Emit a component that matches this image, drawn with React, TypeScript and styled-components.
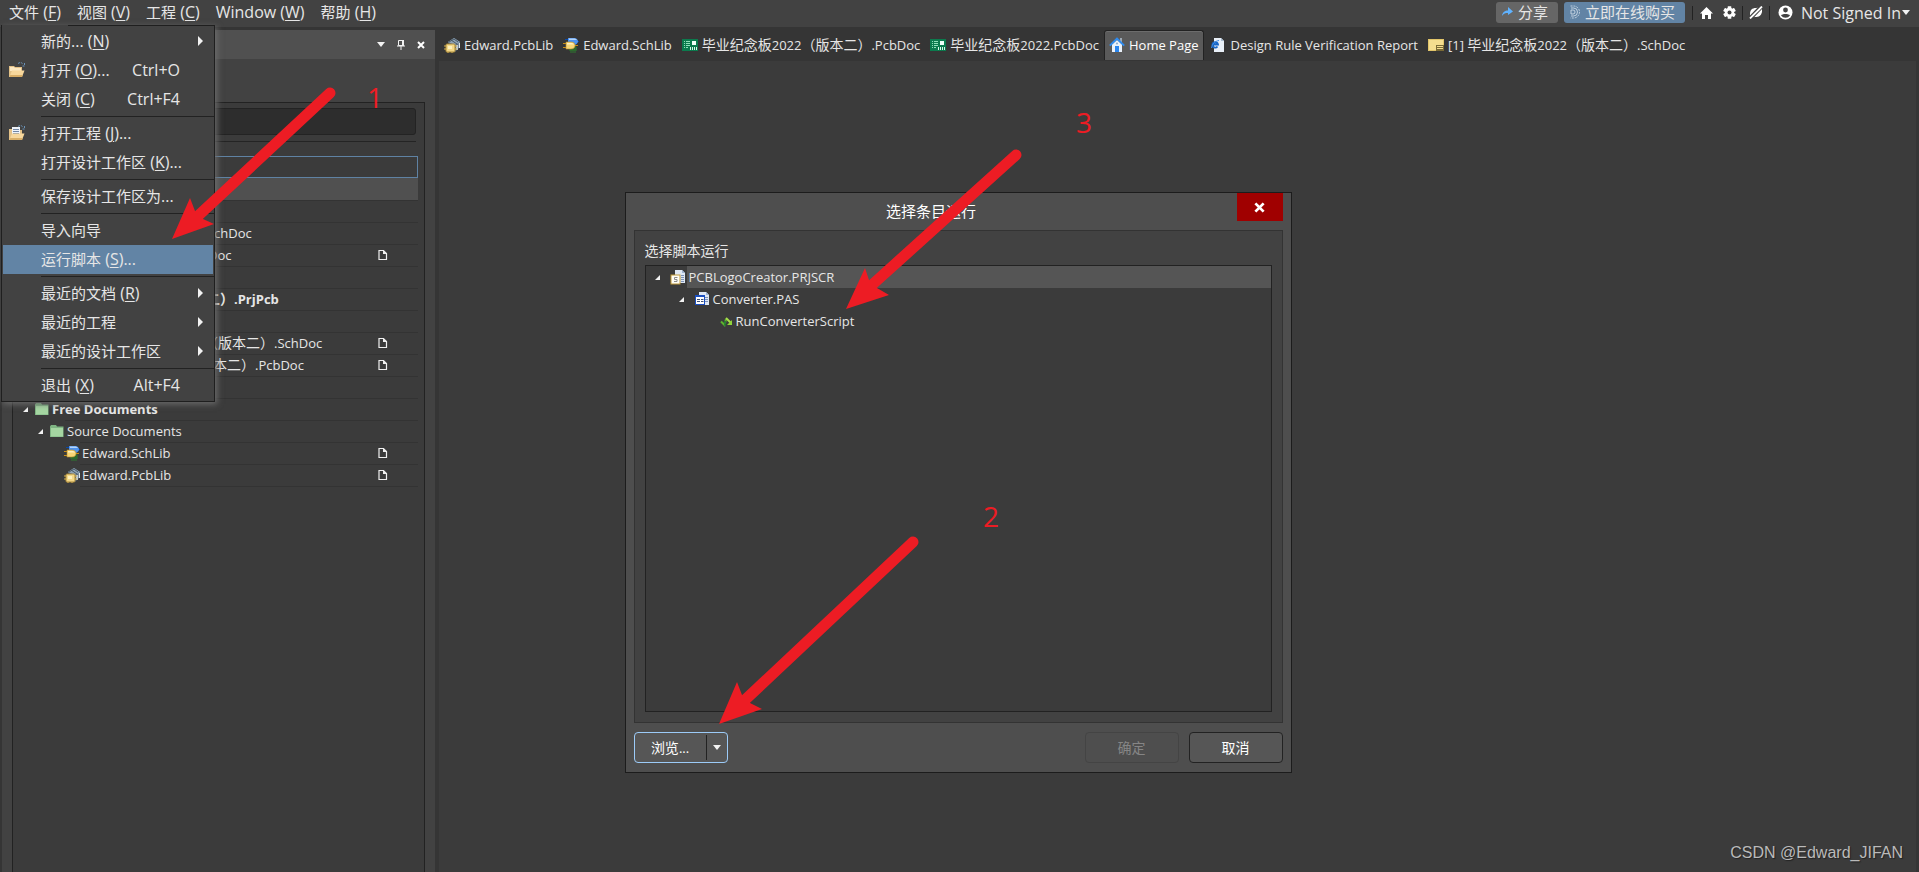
import React from "react";
import styled, { createGlobalStyle, css } from "styled-components";

const LATIN = `"Open Sans", "Noto Sans", "Noto Sans CJK SC", sans-serif`;
const CJK = `"Noto Sans CJK SC", "Open Sans", sans-serif`;

const GlobalStyle = createGlobalStyle`
  * { box-sizing: border-box; }
  body {
    margin: 0;
    background: #353535;
    color: #e6e6e6;
    font: 13px/22px ${LATIN};
  }
  button, input {
    font: inherit;
    color: inherit;
    border: 0;
    padding: 0;
    background: none;
  }
  svg { display: block; flex: none; }
  u { text-underline-offset: 2px; text-decoration-thickness: 1px; }
`;

/* ---------- text ---------- */

const Han = styled.span<{ $size: number }>`
  font-family: ${CJK};
  font-size: ${(p) => p.$size}px;
  line-height: 1;
`;

const Text = styled.span`
  white-space: pre;
`;

function Mixed({ children, size = 14 }: { children: string; size?: number }) {
  const parts = children.split(/([\u3000-\u9fff\uff00-\uffef]+)/);
  return (
    <Text>
      {parts.map((part, i) =>
        i % 2 ? (
          <Han key={i} $size={size}>
            {part}
          </Han>
        ) : (
          part
        )
      )}
    </Text>
  );
}

function MenuText({ label, accel, tail }: { label: string; accel?: string; tail?: string }) {
  return (
    <Text>
      <Mixed size={15}>{label}</Mixed>
      {accel && (
        <>
          {" ("}
          <u>{accel}</u>)
        </>
      )}
      {tail}
    </Text>
  );
}

/* ---------- icons ---------- */

const PcbLibIcon = () => (
  <svg width="16" height="16" viewBox="0 0 16 16">
    <path d="M4 5 10 1l6 4v5l-5 5-4-3z" fill="#596b7c" />
    <path d="M4 5 10 1l6 4-5 3z" fill="#8ea3b5" />
    <path d="M7 3l6 4M10 2l4 3M5 5l5-3" stroke="#4a5966" strokeWidth="1" />
    <path d="M13 8v5M15.500 6v5" stroke="#dfe7ec" strokeWidth="1.500" />
    <rect x="2" y="7" width="9" height="8" rx="1" fill="#f3d888" stroke="#a98738" />
    <path d="M0 9h3M0 12h3M10 9h3M10 12h3M4 15v1M8 15v1" stroke="#d3b04f" />
    <rect x="4" y="9" width="4" height="3" fill="#fdf0bd" />
  </svg>
);

const SchLibIcon = () => (
  <svg width="16" height="16" viewBox="0 0 16 16">
    <path d="M2 2.500h3M12 4.500h4" stroke="#0a49a8" />
    <path d="M5 1h6c3 0 4 2 4 3.500S13 8 11 8H5z" fill="#4f93ee" />
    <path d="M6 1.500h5c1.500 0 2 .5 3 1.500H6z" fill="#b3d5fb" />
    <path d="M6 11h8M6 13h8M8 10v6M10 10v6M12 10v6" stroke="#2f7a31" />
    <rect x="8" y="9" width="5" height="5" fill="#2c6a2d" />
    <path d="M0 6.500h4M0 10.500h4M11 8.500h4" stroke="#c98d13" />
    <path d="M3 5h5c3 0 4 1.800 4 3.500S11 12 8 12H3z" fill="#f8d676" stroke="#b78929" strokeWidth=".6" />
    <path d="M4 6h4c1.500 0 2.500.6 3 1.500H4z" fill="#fdf0c0" />
  </svg>
);

const PcbDocIcon = () => (
  <svg width="16" height="16" viewBox="0 0 16 16">
    <rect x="0" y="2" width="16" height="12" fill="#0b7a4d" />
    <path d="M2 4.500h1M4 4.500h4M2 6.500h1M4 6.500h4M2 8.500h1M4 8.500h4M2 10.500h1M4 10.500h2" stroke="#8ee0b9" />
    <rect x="10" y="4" width="4" height="4" fill="#f1fff8" />
    <path d="M8.500 10v3M10.500 10v3M12.500 10v3M14.500 10v3" stroke="#d7f7e7" />
  </svg>
);

const HouseIcon = () => (
  <svg width="16" height="16" viewBox="0 0 16 16">
    <path d="M11 1h2v5h-2z" fill="#9ba7b3" />
    <path d="M3 7.500 8 3l5 4.500V15H3z" fill="#e9f1fa" />
    <path d="M.8 8.600 8 1.600l7.200 7" fill="none" stroke="#2f8cf0" strokeWidth="2" />
    <rect x="6" y="9" width="4" height="6" fill="#2a86ee" />
    <circle cx="8" cy="6.500" r="1" fill="#8aa8c8" />
  </svg>
);

const ReportIcon = () => (
  <svg width="16" height="16" viewBox="0 0 16 16">
    <path d="M3 1h7l3 3v11H3z" fill="#e9f0f8" />
    <path d="M10 1v3h3z" fill="#a9bdd2" />
    <path d="M1.500 7.500H7A2.800 2.800 0 0 0 1.500 7.500a2.800 2.800 0 0 0 5 2" fill="none" stroke="#1767c8" strokeWidth="1.800" />
    <path d="M.5 11C1 7 4 4 8 3.500" fill="none" stroke="#3c8be4" />
  </svg>
);

const SheetIcon = () => (
  <svg width="16" height="16" viewBox="0 0 16 16">
    <rect x=".5" y="2.500" width="15" height="11" fill="#f4dd8f" stroke="#e2c56a" />
    <rect x="8" y="8" width="8" height="6" fill="#7a6a35" />
    <path d="M9 9.500h6M9 11.500h6" stroke="#f4dd8f" />
  </svg>
);

const FolderIcon = () => (
  <svg width="14" height="14" viewBox="0 0 14 14">
    <path d="M0 2.500 1 1h5l1 1.500h6.500V13H0z" fill="#7fb583" />
    <path d="M1 4h12v8.500H1z" fill="#a5d6a2" />
  </svg>
);

const OpenFolder = ({ project }: { project?: boolean }) => (
  <svg width="16" height="16" viewBox="0 0 16 16">
    <path d="M0 4h5l1 1h7v10H0z" fill="#e3c187" />
    {project ? (
      <>
        <path d="M3 2h8v9H3z" fill="#eef2f8" />
        <path d="M4 4.500h6M4 6.500h6M4 8.500h6" stroke="#7186a5" />
      </>
    ) : (
      <path d="M1 5h4l1 1h6v3H1z" fill="#fbe7c0" />
    )}
    <path d="M.5 15 3 8.500h12.500L13 15z" fill="#f7d79c" />
    <path d="M.5 15h12.500l.8-2H1.300z" fill="#d8ad66" />
    <path d="M9 1.500c2-1.500 4-1 5 .8M15.500 1v3h-3" fill="none" stroke="#6b93b8" strokeDasharray="2 1" />
  </svg>
);

const ScriptProjectIcon = () => (
  <svg width="16" height="16" viewBox="0 0 16 16">
    <path d="M5 1h7l3 3v10H5z" fill="#dfe8f5" />
    <path d="M12 1v3h3z" fill="#9eb4d4" />
    <path d="M11 6.500h3M11 8.500h3M11 10.500h3M11 12.500h3" stroke="#7d93bb" />
    <rect x="1" y="6" width="9" height="9" fill="#fffdf5" stroke="#c09a3a" />
    <path d="M7.500 8.500h-3v2h2.500v2h-3" fill="none" stroke="#8c8c8c" />
  </svg>
);

const ScriptUnitIcon = () => (
  <svg width="16" height="16" viewBox="0 0 16 16">
    <path d="M5 1h7l3 3v10H5z" fill="#dfe8f5" />
    <path d="M12 1v3h3z" fill="#9eb4d4" />
    <path d="M11 6.500h3M11 8.500h3M11 10.500h3" stroke="#7d93bb" />
    <rect x="1.500" y="4.500" width="9" height="9" fill="#fff" stroke="#1b4fc0" />
    <path d="M1 5h10" stroke="#1b4fc0" strokeWidth="2" />
    <path d="M3 8.500h3M7 8.500h2.500M3 10.500h3M7 10.500h2.500" stroke="#3b4d74" />
  </svg>
);

const ProcedureIcon = () => (
  <svg width="13" height="13" viewBox="0 0 13 13">
    <path d="M1 6.500 4.500 10 6 4" fill="none" stroke="#5cb52c" strokeWidth="2" />
    <path d="m6 3 5 5" stroke="#a8e04a" strokeWidth="2" />
    <path d="M12 5v5H7z" fill="#8fd43a" />
    <path d="M5 6v4h1" stroke="#1c6d33" strokeWidth="1.500" fill="none" />
  </svg>
);

const DocStateIcon = () => (
  <svg width="10" height="12" viewBox="0 0 10 12">
    <path d="M1 1.500h4.500l3 3v6H1z" fill="none" stroke="#f0f0f0" strokeWidth="1.200" />
    <path d="M5 1v4h4z" fill="#f0f0f0" />
  </svg>
);

const Expanded = () => (
  <svg width="5" height="5" viewBox="0 0 6 6">
    <path d="M6 0v6H0z" fill="#f2f2f2" />
  </svg>
);

const Caret = () => (
  <svg width="8" height="5" viewBox="0 0 8 5">
    <path d="M0 0h8L4 5z" fill="#f2f2f2" />
  </svg>
);

const Submenu = () => (
  <svg width="5" height="10" viewBox="0 0 5 10">
    <path d="M0 0v10l5-5z" fill="#f2f2f2" />
  </svg>
);

const PinIcon = () => (
  <svg width="8" height="10" viewBox="0 0 8 10">
    <path d="M1.500.5h5v5h-5zM0 6h8M4 6v4" fill="none" stroke="#f2f2f2" />
    <path d="M5 0h2v6H5z" fill="#f2f2f2" />
  </svg>
);

const CrossIcon = ({ size }: { size: number }) => (
  <svg width={size} height={size} viewBox="0 0 8 8">
    <path d="m1 1 6 6M7 1 1 7" stroke="#fff" strokeWidth="2" />
  </svg>
);

const ShareIcon = () => (
  <svg width="11" height="10" viewBox="0 0 11 10">
    <path d="M0 9c.5-4 3-5.500 6-5.500V0l5 4.500L6 8V6C3.500 6 1.500 6.500 0 9z" fill="#5fb2ff" />
  </svg>
);

const AltiumIcon = () => (
  <svg width="10" height="14" viewBox="0 0 10 14" fill="none" stroke="#d9e4ef" strokeWidth=".8">
    <path d="M.5 1h3a6 6 0 0 1 0 12h-3" strokeDasharray="2 1" />
    <path d="M1 3h2.500a4 4 0 0 1 0 8H1" />
    <path d="M1 5h2a2 2 0 0 1 0 4H1z" />
  </svg>
);

const HomeIcon = () => (
  <svg width="13" height="12" viewBox="0 0 13 12">
    <path d="M6.500 0 13 6.500h-2V12H8V8H5v4H2V6.500H0z" fill="#fff" />
  </svg>
);

const GearIcon = () => (
  <svg width="13" height="13" viewBox="-6.500 -6.500 13 13">
    {[0, 60, 120].map((angle) => (
      <rect key={angle} x="-1.800" y="-6.300" width="3.600" height="12.600" rx=".5" fill="#fff" transform={`rotate(${angle})`} />
    ))}
    <circle r="3.400" fill="none" stroke="#fff" strokeWidth="2.600" />
    <circle r="2" fill="#424242" />
  </svg>
);

const OfflineIcon = () => (
  <svg width="14" height="13" viewBox="0 0 14 13">
    <path d="M1 8c0-4 2-6 6-6l3-.5L13 3v3c-1 4-3 5-7 5l-3 .5L1 11z" fill="#fff" />
    <path d="M13 0 1 12.500" stroke="#424242" strokeWidth="4.200" />
    <path d="M13 .5 1 12.500" stroke="#fff" strokeWidth="1.800" />
  </svg>
);

const UserIcon = () => (
  <svg width="15" height="15" viewBox="0 0 15 15">
    <circle cx="7.500" cy="7.500" r="7" fill="#fff" />
    <circle cx="7.500" cy="5" r="2.400" fill="#424242" />
    <path d="M3 10.500c1-2 8-2 9 0a5.500 5.500 0 0 1-9 0z" fill="#424242" />
  </svg>
);

/* ---------- shell ---------- */

const Shell = styled.div`
  position: relative;
  display: flex;
  flex-direction: column;
  min-height: 100vh;
  overflow: hidden;
`;

const MenuBar = styled.header`
  position: relative;
  z-index: 2;
  display: flex;
  align-items: flex-start;
  height: 27px;
  padding: 0 9px 0 1px;
  background: #424242;
  font-size: 16px;
`;

const MenuTitle = styled.button`
  height: 24px;
  padding: 0 8px;
  line-height: 22px;
`;

const Tools = styled.div`
  display: flex;
  align-items: center;
  height: 25px;
  margin-left: auto;
`;

const ToolButton = styled.button<{ $blue?: boolean }>`
  display: flex;
  align-items: center;
  gap: 5px;
  height: 21px;
  margin-right: 6px;
  padding: 0 10px 1px 6px;
  border-radius: 3px;
  line-height: 20px;
  background: ${(p) => (p.$blue ? "#6284a5" : "#666")};
`;

const IconButton = styled.button`
  display: flex;
  align-items: center;
  justify-content: center;
  width: 23px;
  height: 21px;
`;

const Divider = styled.i`
  width: 1px;
  height: 14px;
  margin: 0 2px 0 1px;
  background: #222;
`;

const Account = styled.button`
  display: flex;
  align-items: center;
  gap: 8px;
  padding-left: 6px;
  line-height: 22px;
`;

const AccountName = styled.span`
  display: flex;
  align-items: center;
  gap: 1px;
`;

/* ---------- file menu ---------- */

const Menu = styled.div`
  position: absolute;
  z-index: 3;
  top: 25px;
  left: 1px;
  width: 214px;
  padding: 1px 0;
  border: 1px solid #1f1f1f;
  background: #424242;
  font-size: 16px;
  box-shadow: 2px 2px 6px #6c6c6c;

  &::before {
    content: "";
    position: absolute;
    top: -1px;
    left: 0;
    width: 66px;
    height: 1px;
    background: #424242;
  }
`;

const MenuItem = styled.button<{ $active?: boolean }>`
  display: grid;
  grid-template-columns: 38px 1fr auto 33px;
  align-items: center;
  width: calc(100% - 2px);
  height: 29px;
  margin: 0 1px;
  padding-bottom: 2px;
  text-align: left;
  background: ${(p) => (p.$active ? "#6284a5" : "transparent")};
`;

const MenuIconSlot = styled.span`
  padding-left: 6px;
`;

const SubmenuSlot = styled.span`
  display: flex;
  justify-content: flex-end;
  padding-right: 10px;
`;

const Separator = styled.hr`
  height: 1px;
  margin: 2px 0 2px 39px;
  border: 0;
  background: #222;
`;

type Entry = {
  label: string;
  accel?: string;
  tail?: string;
  keys?: string;
  icon?: React.ReactNode;
  sub?: boolean;
  active?: boolean;
};

const fileMenu: Entry[][] = [
  [
    { label: "新的...", accel: "N", sub: true },
    { label: "打开", accel: "O", tail: "...", keys: "Ctrl+O", icon: <OpenFolder /> },
    { label: "关闭", accel: "C", keys: "Ctrl+F4" },
  ],
  [
    { label: "打开工程", accel: "J", tail: "...", icon: <OpenFolder project /> },
    { label: "打开设计工作区", accel: "K", tail: "..." },
  ],
  [{ label: "保存设计工作区为..." }],
  [{ label: "导入向导" }, { label: "运行脚本", accel: "S", tail: "...", active: true }],
  [
    { label: "最近的文档", accel: "R", sub: true },
    { label: "最近的工程", sub: true },
    { label: "最近的设计工作区", sub: true },
  ],
  [{ label: "退出", accel: "X", keys: "Alt+F4" }],
];

/* ---------- projects panel ---------- */

const Body = styled.div`
  display: flex;
  flex: 1;
`;

const Panel = styled.aside`
  display: flex;
  flex-direction: column;
  width: 433px;
  margin: 3px 4px 0 2px;
  background: #424242;
`;

const PanelTitle = styled.div`
  display: flex;
  align-items: center;
  justify-content: flex-end;
  gap: 12px;
  height: 29px;
  padding-right: 10px;
  background: #505050;
`;

const PanelButton = styled.button`
  display: flex;
  align-items: center;
  height: 16px;
`;

const PanelBox = styled.div`
  flex: 1;
  margin: 43px 10px 0;
  padding: 5px 6px 0;
  border: 1px solid #222;
  border-bottom: 0;
  background: #3b3b3b;
`;

const Search = styled.input`
  display: block;
  width: calc(100% - 2px);
  height: 27px;
  padding: 0 8px;
  border: 1px solid #232323;
  border-radius: 3px;
  background: #2d2d2d;
`;

const Rule = styled.hr`
  height: 1px;
  margin: 6px 2px 14px 0;
  border: 0;
  background: #242424;
`;

const FocusedRow = styled.div`
  height: 22px;
  border: 1px solid #5f82a3;
`;

const ShadedRow = styled.div`
  height: 22px;
  background: #505050;
`;

const TreeRow = styled.div<{ $level: number }>`
  display: flex;
  align-items: center;
  height: 22px;
  padding-left: ${(p) => p.$level * 15 + 1}px;
`;

const Twisty = styled.span`
  display: flex;
  justify-content: flex-end;
  width: 8px;
  margin-right: 6px;
`;

const IconSlot = styled.span`
  display: flex;
  justify-content: center;
  width: 16px;
`;

const TreeCell = styled.span<{ $bold?: boolean; $inset?: number }>`
  display: flex;
  flex: 1;
  align-items: center;
  justify-content: space-between;
  height: 22px;
  padding: 0 30px 1px ${(p) => p.$inset ?? 2}px;
  border-top: 1px solid #333;
  font-weight: ${(p) => (p.$bold ? 700 : 400)};
`;

const TreeEnd = styled.hr`
  height: 1px;
  margin: 0 0 0 61px;
  border: 0;
  background: #333;
`;

type Node = {
  text?: string;
  level: number;
  inset?: number;
  icon?: React.ReactNode;
  open?: boolean;
  bold?: boolean;
  state?: boolean;
};

const projectTree: Node[] = [
  { level: 0 },
  { level: 2, inset: 134, text: "chDoc" },
  { level: 2, inset: 128, text: "Doc", state: true },
  { level: 0 },
  { level: 0, inset: 156, text: "二）.PrjPcb", bold: true },
  { level: 0 },
  { level: 2, inset: 124, text: "（版本二）.SchDoc", state: true },
  { level: 2, inset: 133, text: "本二）.PcbDoc", state: true },
  { level: 0 },
  { level: 0, text: "Free Documents", icon: <FolderIcon />, open: true, bold: true },
  { level: 1, text: "Source Documents", icon: <FolderIcon />, open: true },
  { level: 2, text: "Edward.SchLib", icon: <SchLibIcon />, state: true },
  { level: 2, text: "Edward.PcbLib", icon: <PcbLibIcon />, state: true },
];

/* ---------- workspace ---------- */

const Workspace = styled.main`
  display: flex;
  flex: 1;
  flex-direction: column;
  min-width: 0;
`;

const Tabs = styled.nav`
  display: flex;
  align-items: flex-end;
  height: 34px;
  padding-bottom: 1px;
`;

const Tab = styled.button<{ $active?: boolean }>`
  display: flex;
  flex: none;
  align-items: center;
  gap: 4px;
  height: 30px;
  padding: 0 5px 1px;

  ${(p) =>
    p.$active &&
    css`
      margin-right: 2px;
      padding: 0 4px 2px;
      border: 1px solid #222;
      border-bottom: 0;
      border-radius: 3px 3px 0 0;
      background: #5a5a5a;
      box-shadow: inset 0 1px #6c6c6c;
      color: #fff;
    `}
`;

const Canvas = styled.div`
  flex: 1;
  margin-right: 3px;
  background: #3b3b3b;
`;

const tabs = [
  { text: "Edward.PcbLib", icon: <PcbLibIcon /> },
  { text: "Edward.SchLib", icon: <SchLibIcon /> },
  { text: "毕业纪念板2022（版本二）.PcbDoc", icon: <PcbDocIcon /> },
  { text: "毕业纪念板2022.PcbDoc", icon: <PcbDocIcon /> },
  { text: "Home Page", icon: <HouseIcon />, active: true },
  { text: "Design Rule Verification Report", icon: <ReportIcon /> },
  { text: "[1] 毕业纪念板2022（版本二）.SchDoc", icon: <SheetIcon /> },
];

/* ---------- dialog ---------- */

const Dialog = styled.section`
  position: absolute;
  z-index: 4;
  top: 192px;
  left: calc(50% - 335px);
  width: 667px;
  padding: 0 8px 9px;
  border: 1px solid #1c1c1c;
  background: #4e4e4e;
`;

const DialogTitle = styled.header`
  display: flex;
  align-items: flex-start;
  height: 37px;
  margin-left: -8px;
  color: #fff;
`;

const DialogName = styled.h1`
  flex: 1;
  margin: 0;
  font-size: 15px;
  font-weight: 400;
  line-height: 36px;
  text-align: center;
`;

const CloseButton = styled.button`
  display: flex;
  align-items: center;
  justify-content: center;
  width: 46px;
  height: 28px;
  background: #a00000;
`;

const Group = styled.div`
  padding: 9px 10px 10px;
  border: 1px solid #333;
  background: #424242;
`;

const GroupLabel = styled.div`
  height: 25px;
`;

const ScriptTree = styled.div`
  height: 447px;
  border: 1px solid #222;
  background: #3b3b3b;
`;

const ScriptRow = styled.div<{ $indent: number }>`
  display: flex;
  align-items: center;
  height: 22px;
  padding-left: ${(p) => p.$indent}px;
`;

const ScriptCell = styled.span<{ $selected?: boolean }>`
  flex: 1;
  height: 22px;
  padding-left: 2px;
  background: ${(p) => (p.$selected ? "#555" : "transparent")};
`;

const ScriptTwisty = styled(Twisty)`
  justify-content: center;
  margin-right: 8px;
`;

const ScriptIcon = styled.span`
  display: flex;
  justify-content: flex-end;
  min-width: 13px;
  margin-right: 1px;
`;

const Footer = styled.footer`
  display: flex;
  gap: 10px;
  margin-top: 9px;
`;

const DialogButton = styled.button`
  width: 94px;
  height: 31px;
  border: 1px solid #222;
  border-radius: 4px;
  background: #565656;
  color: #fff;

  &:disabled {
    border-color: #444;
    background: #4e4e4e;
    color: #858585;
  }
`;

const SplitButton = styled.div`
  display: flex;
  align-items: center;
  width: 94px;
  height: 31px;
  margin-right: auto;
  border: 1px solid #9ccbf8;
  border-radius: 4px;
  background: #565656;
  color: #fff;
`;

const SplitMain = styled.button`
  flex: 1;
  height: 25px;
  border-right: 1px solid #222;
`;

const SplitDrop = styled.button`
  display: flex;
  align-items: center;
  justify-content: center;
  width: 20px;
  height: 25px;
`;

/* ---------- annotations ---------- */

const Markup = styled.svg`
  position: absolute;
  z-index: 5;
  top: 0;
  left: 0;
  width: 100%;
  height: 100%;
  pointer-events: none;
`;

const Step = styled.span<{ $x: number; $y: number }>`
  position: absolute;
  z-index: 5;
  left: ${(p) => p.$x}px;
  top: ${(p) => p.$y}px;
  color: #ed1c24;
  font-size: 28px;
  line-height: 32px;
`;

const Watermark = styled.div`
  position: absolute;
  right: 16px;
  bottom: 8px;
  color: #bababa;
  font: 16px/22px "Liberation Sans", sans-serif;
  text-shadow: 1px 1px 1px #222;
`;

const arrows = [
  { tail: [330, 93], tip: [172, 239], left: [190, 198], right: [214, 224], neck: [199, 215] },
  { tail: [913, 542], tip: [719, 724], left: [737, 682], right: [762, 709], neck: [746, 699] },
  { tail: [1016, 155], tip: [846, 309], left: [865, 268], right: [889, 295], neck: [873, 284] },
];

export default function App() {
  return (
    <Shell>
      <GlobalStyle />
      <MenuBar>
        <MenuTitle><MenuText label="文件" accel="F" /></MenuTitle>
        <MenuTitle><MenuText label="视图" accel="V" /></MenuTitle>
        <MenuTitle><MenuText label="工程" accel="C" /></MenuTitle>
        <MenuTitle><MenuText label="Window" accel="W" /></MenuTitle>
        <MenuTitle><MenuText label="帮助" accel="H" /></MenuTitle>
        <Tools>
          <ToolButton>
            <ShareIcon />
            <Mixed size={15}>分享</Mixed>
          </ToolButton>
          <ToolButton $blue>
            <AltiumIcon />
            <Mixed size={15}>立即在线购买</Mixed>
          </ToolButton>
          <Divider />
          <IconButton aria-label="Home"><HomeIcon /></IconButton>
          <IconButton aria-label="Settings"><GearIcon /></IconButton>
          <Divider />
          <IconButton aria-label="Offline"><OfflineIcon /></IconButton>
          <Divider />
          <Account>
            <UserIcon />
            <AccountName>
              Not Signed In
              <Caret />
            </AccountName>
          </Account>
        </Tools>
      </MenuBar>

      <Menu>
        {fileMenu.map((group, g) => (
          <React.Fragment key={g}>
            {g > 0 && <Separator />}
            {group.map((item) => (
              <MenuItem key={item.label} $active={item.active}>
                <MenuIconSlot>{item.icon}</MenuIconSlot>
                <MenuText label={item.label} accel={item.accel} tail={item.tail} />
                <span>{item.keys}</span>
                <SubmenuSlot>{item.sub && <Submenu />}</SubmenuSlot>
              </MenuItem>
            ))}
          </React.Fragment>
        ))}
      </Menu>

      <Body>
        <Panel>
          <PanelTitle>
            <PanelButton aria-label="Panel menu"><Caret /></PanelButton>
            <PanelButton aria-label="Pin panel"><PinIcon /></PanelButton>
            <PanelButton aria-label="Close panel"><CrossIcon size={8} /></PanelButton>
          </PanelTitle>
          <PanelBox>
            <Search aria-label="Search" />
            <Rule />
            <FocusedRow />
            <ShadedRow />
            {projectTree.map((node, i) => (
              <TreeRow key={i} $level={node.level}>
                <Twisty>{node.open && <Expanded />}</Twisty>
                <IconSlot>{node.icon}</IconSlot>
                <TreeCell $bold={node.bold} $inset={node.inset}>
                  <Mixed>{node.text ?? ""}</Mixed>
                  {node.state && <DocStateIcon />}
                </TreeCell>
              </TreeRow>
            ))}
            <TreeEnd />
          </PanelBox>
        </Panel>

        <Workspace>
          <Tabs>
            {tabs.map((tab) => (
              <Tab key={tab.text} $active={tab.active}>
                {tab.icon}
                <Mixed>{tab.text}</Mixed>
              </Tab>
            ))}
          </Tabs>
          <Canvas />
        </Workspace>
      </Body>

      <Dialog role="dialog" aria-labelledby="dialog-name">
        <DialogTitle>
          <DialogName id="dialog-name"><Mixed size={15}>选择条目运行</Mixed></DialogName>
          <CloseButton aria-label="Close"><CrossIcon size={11} /></CloseButton>
        </DialogTitle>
        <Group>
          <GroupLabel><Mixed>选择脚本运行</Mixed></GroupLabel>
          <ScriptTree>
            <ScriptRow $indent={8}>
              <ScriptTwisty><Expanded /></ScriptTwisty>
              <ScriptIcon><ScriptProjectIcon /></ScriptIcon>
              <ScriptCell $selected>PCBLogoCreator.PRJSCR</ScriptCell>
            </ScriptRow>
            <ScriptRow $indent={32}>
              <ScriptTwisty><Expanded /></ScriptTwisty>
              <ScriptIcon><ScriptUnitIcon /></ScriptIcon>
              <ScriptCell>Converter.PAS</ScriptCell>
            </ScriptRow>
            <ScriptRow $indent={74}>
              <ScriptIcon><ProcedureIcon /></ScriptIcon>
              <ScriptCell>RunConverterScript</ScriptCell>
            </ScriptRow>
          </ScriptTree>
        </Group>
        <Footer>
          <SplitButton>
            <SplitMain><Mixed>浏览...</Mixed></SplitMain>
            <SplitDrop aria-label="More browse options"><Caret /></SplitDrop>
          </SplitButton>
          <DialogButton disabled><Mixed>确定</Mixed></DialogButton>
          <DialogButton><Mixed>取消</Mixed></DialogButton>
        </Footer>
      </Dialog>

      <Markup aria-hidden="true">
        {arrows.map((a, i) => (
          <g key={i} fill="#ed1c24">
            <path d={`M${a.tail}L${a.neck}`} stroke="#ed1c24" strokeWidth="11" strokeLinecap="round" />
            <path d={`M${a.tip}L${a.left}L${a.neck[0] - 4},${a.neck[1] - 4}L${a.neck[0] + 4},${a.neck[1] + 4}L${a.right}Z`} />
          </g>
        ))}
      </Markup>
      <Step $x={367} $y={81}>1</Step>
      <Step $x={983} $y={500}>2</Step>
      <Step $x={1076} $y={106}>3</Step>
      <Watermark>CSDN @Edward_JIFAN</Watermark>
    </Shell>
  );
}
